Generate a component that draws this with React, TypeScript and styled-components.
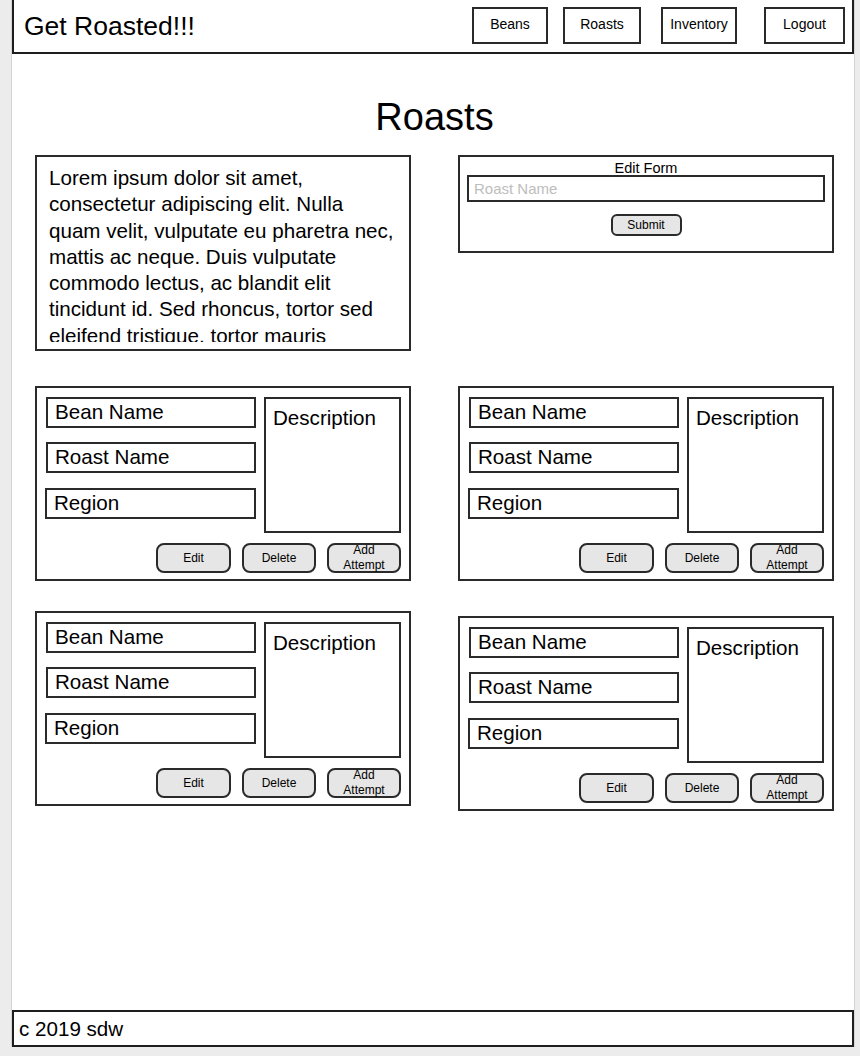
import React from "react";
import styled, { createGlobalStyle } from "styled-components";

const GlobalStyle = createGlobalStyle`
  html, body {
    margin: 0;
    padding: 0;
    background: #ececec;
  }
  body {
    font-family: "Liberation Sans", Arial, Helvetica, sans-serif;
    color: #000;
  }
  *, *::before, *::after {
    box-sizing: border-box;
  }
`;

const Frame = styled.div`
  margin-left: 11px;
  width: 844px;
  height: 1047px;
  background: #fff;
  border-left: 1px solid #d4d4d4;
  border-right: 1px solid #d4d4d4;
  display: flex;
  flex-direction: column;
`;

const Header = styled.header`
  height: 54px;
  border: 2px solid #1e1e1e;
  border-top: 0;
  display: flex;
  align-items: flex-start;
  padding: 0 7px 0 10px;
`;

const Brand = styled.div`
  font-size: 26.5px;
  line-height: 52px;
`;

const Nav = styled.nav`
  margin-left: auto;
  display: flex;
  padding-top: 7px;
`;

const NavButton = styled.div<{ $w: number; $ml: number }>`
  width: ${(p) => p.$w}px;
  margin-left: ${(p) => p.$ml}px;
  height: 37px;
  border: 2px solid #2a2a2a;
  display: flex;
  align-items: center;
  justify-content: center;
  padding-bottom: 3px;
  font-size: 14px;
`;

const Main = styled.main`
  flex: 1;
  padding: 0 20px 0 23px;
`;

const Title = styled.h1`
  margin: 40px 0 15px;
  text-align: center;
  font-weight: normal;
  font-size: 38px;
  line-height: 46px;
`;

const Row = styled.div<{ $mt: number }>`
  display: grid;
  grid-template-columns: 376px 376px;
  column-gap: 47px;
  align-items: start;
  margin-top: ${(p) => p.$mt}px;
`;

const TextPanel = styled.div`
  height: 196px;
  border: 2px solid #2a2a2a;
  padding: 8px 10px 7px 12px;
  display: flex;
  flex-direction: column;
`;

const LoremText = styled.p`
  flex: 1;
  margin: 0;
  overflow: hidden;
  font-size: 20.6px;
  line-height: 26.3px;
`;

const EditForm = styled.form`
  border: 2px solid #2a2a2a;
  padding: 4px 7px 15px;
  display: flex;
  flex-direction: column;
  align-items: center;
  margin: 0;
`;

const FormTitle = styled.div`
  font-size: 14.5px;
  line-height: 14px;
`;

const FormInput = styled.input`
  width: 100%;
  height: 27px;
  border: 2px solid #2a2a2a;
  padding: 0 5px;
  margin: 0;
  font-family: inherit;
  font-size: 15px;
  outline: none;
  background: #fff;
  &::placeholder {
    color: #bdbdbd;
  }
`;

const SubmitButton = styled.button`
  margin-top: 12px;
  width: 71px;
  height: 22px;
  border: 2px solid #2a2a2a;
  border-radius: 6px;
  background: #e6e6e6;
  font-family: inherit;
  font-size: 12px;
  color: #000;
  padding: 0;
`;

const Card = styled.div<{ $offset?: number }>`
  height: 195px;
  margin-top: ${(p) => p.$offset ?? 0}px;
  border: 2px solid #2a2a2a;
  padding: 9px 8px 6px 9px;
`;

const CardTop = styled.div`
  display: grid;
  grid-template-columns: 210px 137px;
  column-gap: 8px;
`;

const FieldStack = styled.div`
  display: flex;
  flex-direction: column;
`;

const Field = styled.div<{ $mt?: number; $shift?: number }>`
  height: 31px;
  margin-top: ${(p) => p.$mt ?? 0}px;
  margin-left: ${(p) => -(p.$shift ?? 0)}px;
  border: 2px solid #2a2a2a;
  padding: 0 0 2px 7px;
  display: flex;
  align-items: center;
  font-size: 20.6px;
`;

const DescBox = styled.div`
  height: 136px;
  border: 2px solid #2a2a2a;
  padding: 7px 0 0 7px;
  font-size: 20.6px;
  line-height: 24px;
`;

const Actions = styled.div`
  display: flex;
  justify-content: flex-end;
  gap: 11px;
  margin-top: 10px;
`;

const ActionButton = styled.button<{ $w: number }>`
  width: ${(p) => p.$w}px;
  height: 30px;
  border: 2px solid #2a2a2a;
  border-radius: 8px;
  background: #e6e6e6;
  font-family: inherit;
  font-size: 12px;
  line-height: 15px;
  color: #000;
  display: flex;
  align-items: center;
  justify-content: center;
  text-align: center;
  padding: 0 10px;
  overflow: visible;
`;

const Footer = styled.footer`
  height: 37px;
  border: 2px solid #1e1e1e;
  padding-left: 5px;
  display: flex;
  align-items: center;
  font-size: 20.6px;
`;

const lorem =
  "Lorem ipsum dolor sit amet, consectetur adipiscing elit. Nulla quam velit, vulputate eu pharetra nec, mattis ac neque. Duis vulputate commodo lectus, ac blandit elit tincidunt id. Sed rhoncus, tortor sed eleifend tristique, tortor mauris molestie elit, et lacinia ipsum quam nec dui.";

const navItems = [
  { label: "Beans", w: 76, ml: 0 },
  { label: "Roasts", w: 78, ml: 15 },
  { label: "Inventory", w: 76, ml: 20 },
  { label: "Logout", w: 81, ml: 27 },
];

function RoastCard({ offset }: { offset?: number }) {
  return (
    <Card $offset={offset}>
      <CardTop>
        <FieldStack>
          <Field>Bean Name</Field>
          <Field $mt={14}>Roast Name</Field>
          <Field $mt={15} $shift={1}>
            Region
          </Field>
        </FieldStack>
        <DescBox>Description</DescBox>
      </CardTop>
      <Actions>
        <ActionButton $w={75}>Edit</ActionButton>
        <ActionButton $w={74}>Delete</ActionButton>
        <ActionButton $w={74}>Add Attempt</ActionButton>
      </Actions>
    </Card>
  );
}

export default function App() {
  return (
    <>
      <GlobalStyle />
      <Frame>
        <Header>
          <Brand>Get Roasted!!!</Brand>
          <Nav>
            {navItems.map((n) => (
              <NavButton key={n.label} $w={n.w} $ml={n.ml}>
                {n.label}
              </NavButton>
            ))}
          </Nav>
        </Header>
        <Main>
          <Title>Roasts</Title>
          <Row $mt={0}>
            <TextPanel>
              <LoremText>{lorem}</LoremText>
            </TextPanel>
            <EditForm onSubmit={(e) => e.preventDefault()}>
              <FormTitle>Edit Form</FormTitle>
              <FormInput placeholder="Roast Name" />
              <SubmitButton type="submit">Submit</SubmitButton>
            </EditForm>
          </Row>
          <Row $mt={35}>
            <RoastCard />
            <RoastCard />
          </Row>
          <Row $mt={30}>
            <RoastCard />
            <RoastCard offset={5} />
          </Row>
        </Main>
        <Footer>c 2019 sdw</Footer>
      </Frame>
    </>
  );
}
